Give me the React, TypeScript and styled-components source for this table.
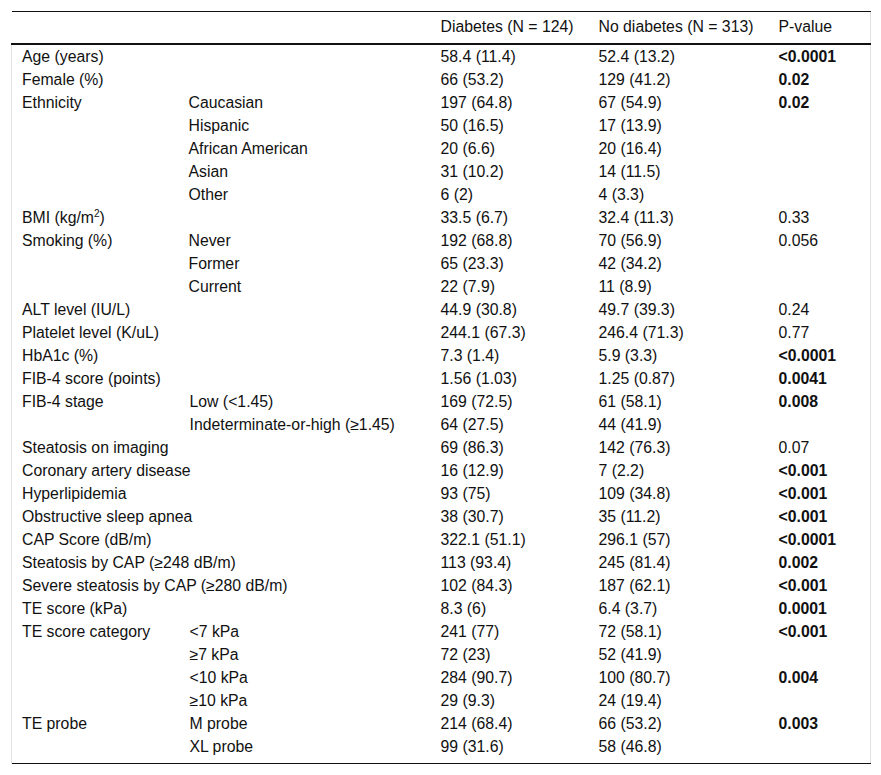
import React from "react";
import styled, { createGlobalStyle } from "styled-components";

const GlobalStyle = createGlobalStyle`
  html, body {
    margin: 0;
    padding: 0;
    background: #fff;
  }
  body {
    font-family: "Liberation Sans", Arial, Helvetica, sans-serif;
    color: #111;
  }
`;

interface Row {
  label?: React.ReactNode;
  sub?: string;
  d: string;
  nd: string;
  p?: string;
  bold?: boolean;
  wide?: boolean;
  shift?: boolean;
}

const rows: Row[] = [
  { label: "Age (years)", d: "58.4 (11.4)", nd: "52.4 (13.2)", p: "<0.0001", bold: true },
  { label: "Female (%)", d: "66 (53.2)", nd: "129 (41.2)", p: "0.02", bold: true },
  { label: "Ethnicity", sub: "Caucasian", d: "197 (64.8)", nd: "67 (54.9)", p: "0.02", bold: true },
  { sub: "Hispanic", d: "50 (16.5)", nd: "17 (13.9)" },
  { sub: "African American", d: "20 (6.6)", nd: "20 (16.4)" },
  { sub: "Asian", d: "31 (10.2)", nd: "14 (11.5)" },
  { sub: "Other", d: "6 (2)", nd: "4 (3.3)" },
  { label: <>BMI (kg/m<sup>2</sup>)</>, d: "33.5 (6.7)", nd: "32.4 (11.3)", p: "0.33" },
  { label: "Smoking (%)", sub: "Never", d: "192 (68.8)", nd: "70 (56.9)", p: "0.056" },
  { sub: "Former", d: "65 (23.3)", nd: "42 (34.2)" },
  { sub: "Current", d: "22 (7.9)", nd: "11 (8.9)" },
  { label: "ALT level (IU/L)", d: "44.9 (30.8)", nd: "49.7 (39.3)", p: "0.24" },
  { label: "Platelet level (K/uL)", d: "244.1 (67.3)", nd: "246.4 (71.3)", p: "0.77" },
  { label: "HbA1c (%)", d: "7.3 (1.4)", nd: "5.9 (3.3)", p: "<0.0001", bold: true },
  { label: "FIB-4 score (points)", d: "1.56 (1.03)", nd: "1.25 (0.87)", p: "0.0041", bold: true },
  { label: "FIB-4 stage", sub: "Low (<1.45)", d: "169 (72.5)", nd: "61 (58.1)", p: "0.008", bold: true, shift: true },
  { sub: "Indeterminate-or-high (≥1.45)", d: "64 (27.5)", nd: "44 (41.9)", shift: true },
  { label: "Steatosis on imaging", wide: true, d: "69 (86.3)", nd: "142 (76.3)", p: "0.07" },
  { label: "Coronary artery disease", wide: true, d: "16 (12.9)", nd: "7 (2.2)", p: "<0.001", bold: true },
  { label: "Hyperlipidemia", wide: true, d: "93 (75)", nd: "109 (34.8)", p: "<0.001", bold: true },
  { label: "Obstructive sleep apnea", wide: true, d: "38 (30.7)", nd: "35 (11.2)", p: "<0.001", bold: true },
  { label: "CAP Score (dB/m)", wide: true, d: "322.1 (51.1)", nd: "296.1 (57)", p: "<0.0001", bold: true },
  { label: "Steatosis by CAP (≥248 dB/m)", wide: true, d: "113 (93.4)", nd: "245 (81.4)", p: "0.002", bold: true },
  { label: "Severe steatosis by CAP (≥280 dB/m)", wide: true, d: "102 (84.3)", nd: "187 (62.1)", p: "<0.001", bold: true },
  { label: "TE score (kPa)", wide: true, d: "8.3 (6)", nd: "6.4 (3.7)", p: "0.0001", bold: true },
  { label: "TE score category", sub: "<7 kPa", d: "241 (77)", nd: "72 (58.1)", p: "<0.001", bold: true, shift: true },
  { sub: "≥7 kPa", d: "72 (23)", nd: "52 (41.9)", shift: true },
  { sub: "<10 kPa", d: "284 (90.7)", nd: "100 (80.7)", p: "0.004", bold: true, shift: true },
  { sub: "≥10 kPa", d: "29 (9.3)", nd: "24 (19.4)", shift: true },
  { label: "TE probe", sub: "M probe", d: "214 (68.4)", nd: "66 (53.2)", p: "0.003", bold: true, shift: true },
  { sub: "XL probe", d: "99 (31.6)", nd: "58 (46.8)", shift: true },
];

const Wrapper = styled.div`
  margin: 11px 0 0 11px;
  width: 860px;
  border-right: 1px solid #e2e2e2;
  box-sizing: border-box;
`;

const Table = styled.table`
  width: 859px;
  border-collapse: collapse;
  table-layout: fixed;
  font-size: 15.8px;
  line-height: 19px;
`;

const HeadRow = styled.tr`
  border-top: 1px solid #111;
  border-bottom: 2px solid #111;
`;

const Th = styled.th`
  font-weight: normal;
  text-align: left;
  padding: 5px 10px 7px;
  height: 19px;
  white-space: nowrap;
`;

const Body = styled.tbody`
  border-bottom: 1px solid #111;

  tr:first-child td {
    padding-top: 2px;
  }
  tr:last-child td {
    padding-bottom: 7px;
  }
`;

const Td = styled.td<{ $bold?: boolean; $shift?: boolean; $first?: boolean }>`
  padding: 2px 10px 2px ${(p) => (p.$shift ? "11px" : "10px")};
  vertical-align: top;
  white-space: nowrap;
  font-weight: ${(p) => (p.$bold ? "bold" : "normal")};
  border-left: ${(p) => (p.$first ? "1px solid #e2e2e2" : "none")};

  sup {
    font-size: 10px;
    line-height: 0;
    vertical-align: 6px;
  }
`;

export default function App() {
  return (
    <>
      <GlobalStyle />
      <Wrapper>
        <Table>
          <colgroup>
            <col style={{ width: 167 }} />
            <col style={{ width: 252 }} />
            <col style={{ width: 158 }} />
            <col style={{ width: 180 }} />
            <col style={{ width: 102 }} />
          </colgroup>
          <thead>
            <HeadRow>
              <Th />
              <Th />
              <Th>Diabetes (N = 124)</Th>
              <Th>No diabetes (N = 313)</Th>
              <Th>P-value</Th>
            </HeadRow>
          </thead>
          <Body>
            {rows.map((r, i) => (
              <tr key={i}>
                {r.wide ? (
                  <Td $first colSpan={2}>
                    {r.label}
                  </Td>
                ) : (
                  <>
                    <Td $first>{r.label}</Td>
                    <Td $shift={r.shift}>{r.sub}</Td>
                  </>
                )}
                <Td>{r.d}</Td>
                <Td>{r.nd}</Td>
                <Td $bold={r.bold}>{r.p}</Td>
              </tr>
            ))}
          </Body>
        </Table>
      </Wrapper>
    </>
  );
}
